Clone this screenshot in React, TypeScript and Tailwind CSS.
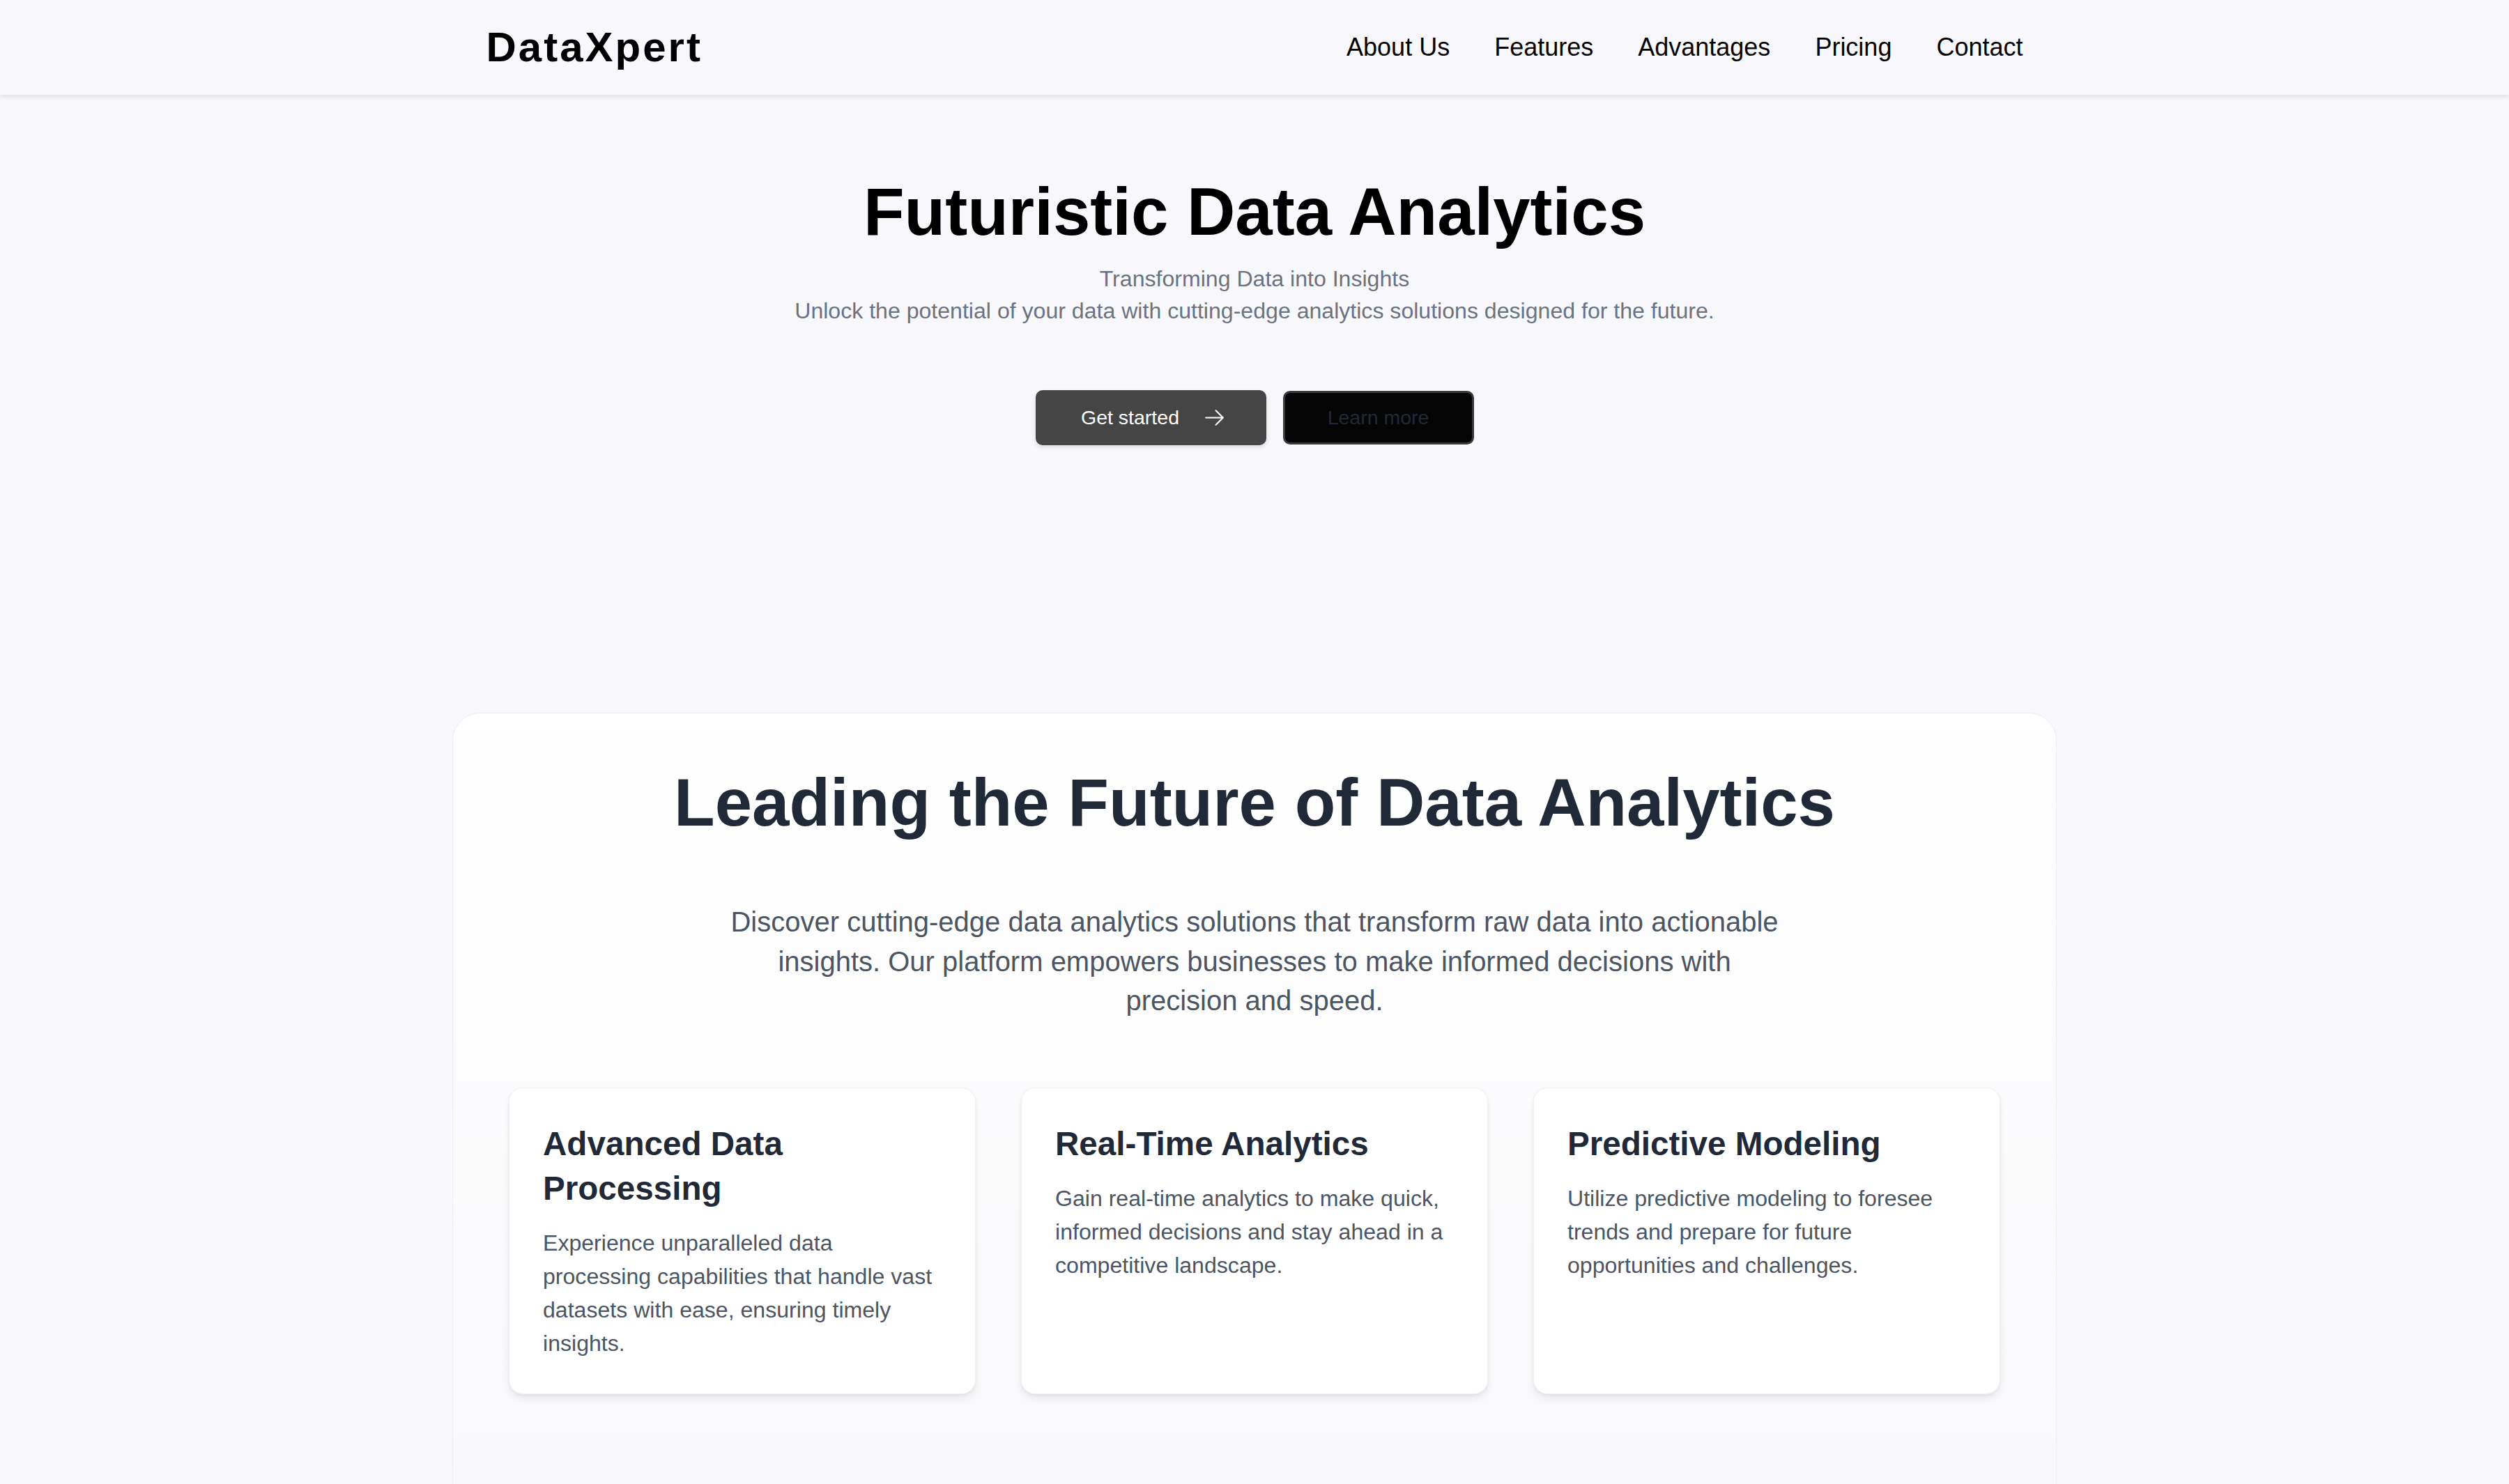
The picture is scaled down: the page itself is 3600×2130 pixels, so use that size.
import React from 'react';

const features = [
  {
    title: 'Advanced Data Processing',
    text: 'Experience unparalleled data processing capabilities that handle vast datasets with ease, ensuring timely insights.',
  },
  {
    title: 'Real-Time Analytics',
    text: 'Gain real-time analytics to make quick, informed decisions and stay ahead in a competitive landscape.',
  },
  {
    title: 'Predictive Modeling',
    text: 'Utilize predictive modeling to foresee trends and prepare for future opportunities and challenges.',
  },
];

const navLinks = ['About Us', 'Features', 'Advantages', 'Pricing', 'Contact'];

const ArrowRight = () => (
  <svg width="33" height="33" viewBox="0 0 24 24" fill="none" stroke="currentColor" strokeWidth="1.5" strokeLinecap="round" strokeLinejoin="round">
    <path d="M13.5 4.5 21 12m0 0-7.5 7.5M21 12H3" />
  </svg>
);

export default function App() {
  return (
    <div className="min-h-screen bg-[#f8f8fc] font-['Liberation_Sans',Arial,sans-serif] text-black">
      <header className="relative z-10 bg-[#f8f8fc] shadow-[0_3px_8px_rgba(0,0,0,0.1)]">
        <div className="mx-auto flex h-[136px] max-w-[2351px] items-center justify-between px-[73px]">
          <div className="text-[60px] font-bold tracking-wider">DataXpert</div>
          <nav className="flex items-center gap-[64px] text-[36px]">
            {navLinks.map((link) => (
              <a key={link} href="#" className="text-black">
                {link}
              </a>
            ))}
          </nav>
        </div>
      </header>

      <main>
        <section className="flex flex-col items-center pt-[120px] text-center">
          <h1 className="text-[96px] font-bold leading-none">Futuristic Data Analytics</h1>
          <p className="mt-[25px] text-[32.1px] leading-[46px] text-[#6b7280]">Transforming Data into Insights</p>
          <p className="text-[32.1px] leading-[47px] text-[#6b7280]">
            Unlock the potential of your data with cutting-edge analytics solutions designed for the future.
          </p>
          <div className="mt-[90px] flex items-center gap-[24px]">
            <button className="flex h-[79px] w-[331px] items-center justify-center gap-[34px] rounded-[10px] bg-[#454545] pl-[8px] text-[28.5px] text-white shadow-[0_3px_6px_rgba(0,0,0,0.12)]">
              <span>Get started</span>
              <ArrowRight />
            </button>
            <button className="flex h-[77px] w-[274px] items-center justify-center rounded-[10px] border-[3px] border-[#3a3a3e] bg-[#050505] text-[28.5px] text-[#1f2937]">
              Learn more
            </button>
          </div>
        </section>

        <section className="mx-auto mt-[384px] w-[2302px] rounded-t-[40px] border border-[#ededf2] bg-gradient-to-b from-white to-[#f8f8fb] px-[80px] pb-[200px] pt-[80px]">
          <h2 className="text-center text-[96px] font-bold leading-none text-[#1f2937]">
            Leading the Future of Data Analytics
          </h2>
          <p className="mx-auto mt-[95px] max-w-[1515px] text-center text-[40px] leading-[56.5px] text-[#4b5563]">
            Discover cutting-edge data analytics solutions that transform raw data into actionable insights. Our platform empowers businesses to make informed decisions with precision and speed.
          </p>
          <div className="mt-[96px] grid grid-cols-3 gap-[65px]">
            {features.map((f) => (
              <div
                key={f.title}
                className="rounded-[20px] border border-[#f1f1f5] bg-white p-[48px] shadow-[0_7px_14px_-3px_rgba(0,0,0,0.1),0_2px_6px_-2px_rgba(0,0,0,0.06)]"
              >
                <h3 className="text-[47.6px] font-bold leading-[64.3px] text-[#1f2937]">{f.title}</h3>
                <p className="mt-[22px] text-[32.1px] leading-[48px] text-[#4b5563]">{f.text}</p>
              </div>
            ))}
          </div>
        </section>
      </main>
    </div>
  );
}
